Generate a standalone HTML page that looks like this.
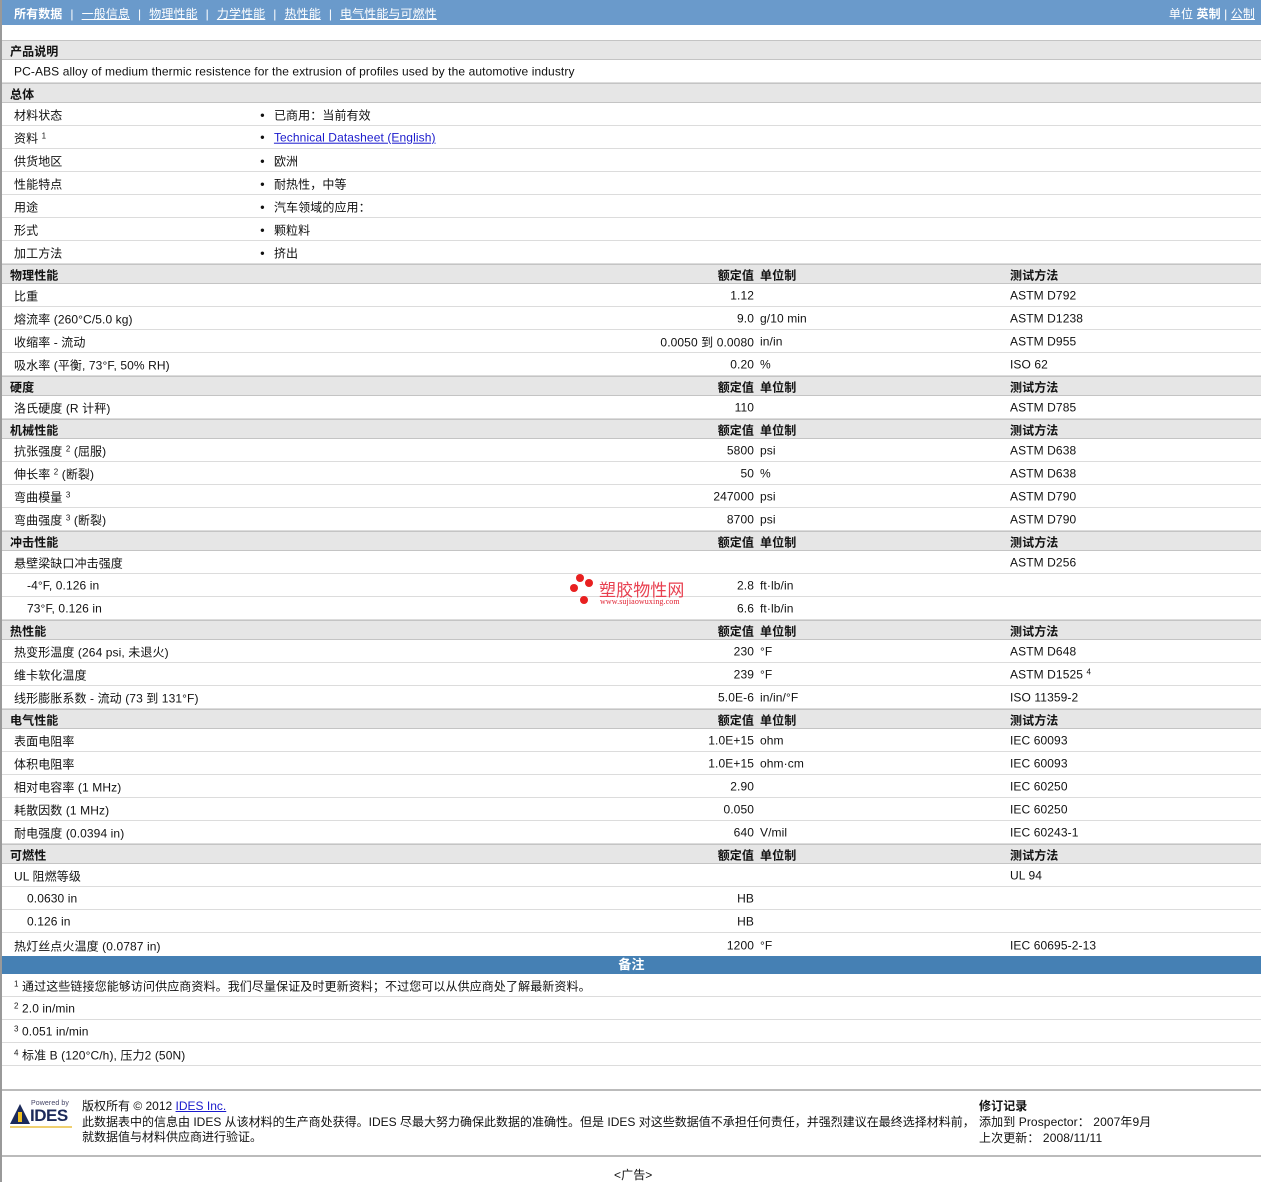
<!DOCTYPE html>
<html><head><meta charset="utf-8"><style>
*{margin:0;padding:0;box-sizing:border-box}
body{width:1261px;height:1182px;background:#fff;font-family:"Liberation Sans","Noto Sans CJK SC",sans-serif;font-size:12px;color:#111;position:relative;overflow:hidden;border-left:2px solid #999;letter-spacing:0.1px}
.top{height:25px;background:#6a9acb;color:#fff;position:relative;font-size:12px}
.top .l{position:absolute;left:12px;top:5px}
.top .r{position:absolute;right:6px;top:5px}
.top u{text-decoration:underline}
.sep{margin:0 8px}
.r0{position:relative;height:23px;border-bottom:1px solid #dcdcdc}
.h{position:relative;height:20px;background:#e6e6e6;border-top:1px solid #c4c4c4;border-bottom:1px solid #c4c4c4;font-weight:bold}
.r0 span,.h span{position:absolute;top:50%;transform:translateY(-45%);white-space:nowrap}
.a{left:12px}.a2{left:25px}.hl{left:8px}
.b{left:258px}.b::before{content:"●";font-size:8px;vertical-align:2px;margin-right:9px}
.v{right:507px;text-align:right}
.u{left:758px}
.m{left:1008px}
sup{font-size:8px;vertical-align:4px}
a{color:#1a1acc}
.bar{height:18px;background:#4580b4;color:#fff;font-weight:bold;text-align:center;font-size:13px;line-height:18px}
</style></head><body>
<div class="top"><div class="l"><b>所有数据</b><span class="sep">|</span><u>一般信息</u><span class="sep">|</span><u>物理性能</u><span class="sep">|</span><u>力学性能</u><span class="sep">|</span><u>热性能</u><span class="sep">|</span><u>电气性能与可燃性</u></div><div class="r">单位 <b>英制</b> | <u>公制</u></div></div>
<div style="height:15px"></div>
<div class="h"><span class="hl">产品说明</span></div>
<div class="r0"><span class="a">PC-ABS alloy of medium thermic resistence for the extrusion of profiles used by the automotive industry</span></div>
<div class="h"><span class="hl">总体</span></div>
<div class="r0"><span class="a">材料状态</span><span class="b">已商用：当前有效</span></div>
<div class="r0"><span class="a">资料 <sup>1</sup></span><span class="b"><a><u>Technical Datasheet (English)</u></a></span></div>
<div class="r0"><span class="a">供货地区</span><span class="b">欧洲</span></div>
<div class="r0"><span class="a">性能特点</span><span class="b">耐热性，中等</span></div>
<div class="r0"><span class="a">用途</span><span class="b">汽车领域的应用：</span></div>
<div class="r0"><span class="a">形式</span><span class="b">颗粒料</span></div>
<div class="r0"><span class="a">加工方法</span><span class="b">挤出</span></div>
<div class="h"><span class="hl">物理性能</span><span class="v">额定值</span><span class="u">单位制</span><span class="m">测试方法</span></div>
<div class="r0"><span class="a">比重</span><span class="v">1.12</span><span class="m">ASTM D792</span></div>
<div class="r0"><span class="a">熔流率 (260°C/5.0 kg)</span><span class="v">9.0</span><span class="u">g/10 min</span><span class="m">ASTM D1238</span></div>
<div class="r0"><span class="a">收缩率 - 流动</span><span class="v">0.0050 到 0.0080</span><span class="u">in/in</span><span class="m">ASTM D955</span></div>
<div class="r0"><span class="a">吸水率 (平衡, 73°F, 50% RH)</span><span class="v">0.20</span><span class="u">%</span><span class="m">ISO 62</span></div>
<div class="h"><span class="hl">硬度</span><span class="v">额定值</span><span class="u">单位制</span><span class="m">测试方法</span></div>
<div class="r0"><span class="a">洛氏硬度 (R 计秤)</span><span class="v">110</span><span class="m">ASTM D785</span></div>
<div class="h"><span class="hl">机械性能</span><span class="v">额定值</span><span class="u">单位制</span><span class="m">测试方法</span></div>
<div class="r0"><span class="a">抗张强度 <sup>2</sup> (屈服)</span><span class="v">5800</span><span class="u">psi</span><span class="m">ASTM D638</span></div>
<div class="r0"><span class="a">伸长率 <sup>2</sup> (断裂)</span><span class="v">50</span><span class="u">%</span><span class="m">ASTM D638</span></div>
<div class="r0"><span class="a">弯曲模量 <sup>3</sup></span><span class="v">247000</span><span class="u">psi</span><span class="m">ASTM D790</span></div>
<div class="r0"><span class="a">弯曲强度 <sup>3</sup> (断裂)</span><span class="v">8700</span><span class="u">psi</span><span class="m">ASTM D790</span></div>
<div class="h"><span class="hl">冲击性能</span><span class="v">额定值</span><span class="u">单位制</span><span class="m">测试方法</span></div>
<div class="r0"><span class="a">悬壁梁缺口冲击强度</span><span class="m">ASTM D256</span></div>
<div class="r0"><span class="a2">-4°F, 0.126 in</span><span class="v">2.8</span><span class="u">ft·lb/in</span></div>
<div class="r0"><span class="a2">73°F, 0.126 in</span><span class="v">6.6</span><span class="u">ft·lb/in</span></div>
<div class="h"><span class="hl">热性能</span><span class="v">额定值</span><span class="u">单位制</span><span class="m">测试方法</span></div>
<div class="r0"><span class="a">热变形温度 (264 psi, 未退火)</span><span class="v">230</span><span class="u">°F</span><span class="m">ASTM D648</span></div>
<div class="r0"><span class="a">维卡软化温度</span><span class="v">239</span><span class="u">°F</span><span class="m">ASTM D1525 <sup>4</sup></span></div>
<div class="r0"><span class="a">线形膨胀系数 - 流动 (73 到 131°F)</span><span class="v">5.0E-6</span><span class="u">in/in/°F</span><span class="m">ISO 11359-2</span></div>
<div class="h"><span class="hl">电气性能</span><span class="v">额定值</span><span class="u">单位制</span><span class="m">测试方法</span></div>
<div class="r0"><span class="a">表面电阻率</span><span class="v">1.0E+15</span><span class="u">ohm</span><span class="m">IEC 60093</span></div>
<div class="r0"><span class="a">体积电阻率</span><span class="v">1.0E+15</span><span class="u">ohm·cm</span><span class="m">IEC 60093</span></div>
<div class="r0"><span class="a">相对电容率 (1 MHz)</span><span class="v">2.90</span><span class="m">IEC 60250</span></div>
<div class="r0"><span class="a">耗散因数 (1 MHz)</span><span class="v">0.050</span><span class="m">IEC 60250</span></div>
<div class="r0"><span class="a">耐电强度 (0.0394 in)</span><span class="v">640</span><span class="u">V/mil</span><span class="m">IEC 60243-1</span></div>
<div class="h"><span class="hl">可燃性</span><span class="v">额定值</span><span class="u">单位制</span><span class="m">测试方法</span></div>
<div class="r0"><span class="a">UL 阻燃等级</span><span class="m">UL 94</span></div>
<div class="r0"><span class="a2">0.0630 in</span><span class="v">HB</span></div>
<div class="r0"><span class="a2">0.126 in</span><span class="v">HB</span></div>
<div class="r0" style="border-bottom:none"><span class="a">热灯丝点火温度 (0.0787 in)</span><span class="v">1200</span><span class="u">°F</span><span class="m">IEC 60695-2-13</span></div>
<div class="bar">备注</div>
<div class="r0"><span class="a"><sup>1</sup> 通过这些链接您能够访问供应商资料。我们尽量保证及时更新资料；不过您可以从供应商处了解最新资料。</span></div>
<div class="r0"><span class="a"><sup>2</sup> 2.0 in/min</span></div>
<div class="r0"><span class="a"><sup>3</sup> 0.051 in/min</span></div>
<div class="r0"><span class="a"><sup>4</sup> 标准 B (120°C/h), 压力2 (50N)</span></div>
<div style="position:absolute;left:0;right:0;top:1089px;border-top:2px solid #bbb"></div>
<div style="position:absolute;left:0;right:0;top:1155px;border-top:2px solid #bbb"></div>
<div style="position:absolute;left:8px;top:1100px;width:64px;height:28px">
<div style="font-size:7px;color:#446;position:absolute;left:21px;top:0">Powered by</div>
<svg width="20" height="22" style="position:absolute;left:0;top:4px" viewBox="0 0 20 22"><polygon points="10,0 20,20 0,20" fill="#1c2a5a"/><rect x="8" y="8" width="4" height="10" fill="#f0c020"/></svg>
<div style="position:absolute;left:20px;top:6px;font-weight:bold;font-size:17px;color:#1c2a5a;letter-spacing:-0.5px">IDES</div>
<div style="position:absolute;left:0;top:26px;width:62px;height:2px;background:#f0d070"></div>
</div>
<div style="position:absolute;left:80px;top:1099px;line-height:15.5px;letter-spacing:0">版权所有 © 2012 <a><u>IDES Inc.</u></a><br>此数据表中的信息由 IDES 从该材料的生产商处获得。IDES 尽最大努力确保此数据的准确性。但是 IDES 对这些数据值不承担任何责任，并强烈建议在最终选择材料前，<br>就数据值与材料供应商进行验证。</div>
<div style="position:absolute;left:977px;top:1098px;line-height:16px"><b>修订记录</b><br>添加到 Prospector： 2007年9月<br>上次更新： 2008/11/11</div>
<div style="position:absolute;left:612px;top:1166px">&lt;广告&gt;</div>
<div style="position:absolute;left:567px;top:574px;width:130px;height:34px">
<span style="position:absolute;left:7px;top:0;width:8px;height:8px;border-radius:50%;background:#e82020"></span>
<span style="position:absolute;left:16px;top:5px;width:8px;height:8px;border-radius:50%;background:#e82020"></span>
<span style="position:absolute;left:1px;top:10px;width:8px;height:8px;border-radius:50%;background:#e82020"></span>
<span style="position:absolute;left:11px;top:22px;width:8px;height:8px;border-radius:50%;background:#e82020"></span>
<span style="position:absolute;left:30px;top:2px;font-size:17px;color:#e84050">塑胶物性网</span>
<span style="position:absolute;left:31px;top:23px;font-size:8px;color:#e02030;font-family:'Liberation Serif',serif">www.sujiaowuxing.com</span>
</div>
</body></html>
